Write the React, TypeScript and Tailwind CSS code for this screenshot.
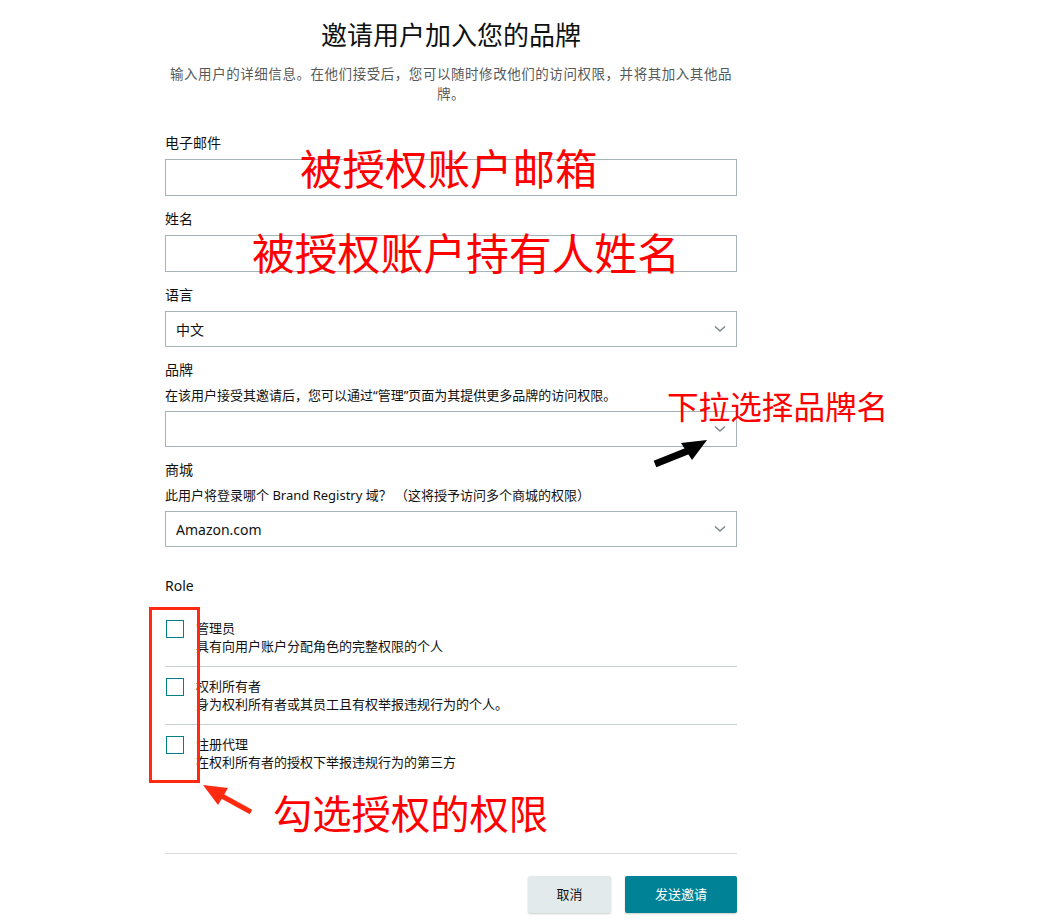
import React from 'react';

const font = { fontFamily: '"Noto Sans", "Noto Sans CJK SC", sans-serif' };

function Chevron() {
  return (
    <svg width="12" height="8" viewBox="0 0 12 8" className="absolute right-[10px] top-1/2 -translate-y-1/2">
      <path d="M1 1.5 L6 6 L11 1.5" fill="none" stroke="#7a8a8f" strokeWidth="1.5" />
    </svg>
  );
}

function Field({ label, help, children }: { label: string; help?: string; children: React.ReactNode }) {
  return (
    <div>
      <div className="text-[14px] leading-[20px] text-[#111]">{label}</div>
      {help && <div className="mt-[5px] text-[13px] leading-[20px] text-[#111]">{help}</div>}
      <div className="mt-[6px]">{children}</div>
    </div>
  );
}

function TextInput() {
  return <div className="h-[37px] w-full border border-[#a6b3b7] bg-white" />;
}

function Select({ value }: { value?: string }) {
  return (
    <div className="relative flex h-[36px] w-full items-center border border-[#a6b3b7] bg-white pl-[10px] text-[14px] text-[#111]">
      {value}
      <Chevron />
    </div>
  );
}

const roles = [
  { title: '管理员', desc: '具有向用户账户分配角色的完整权限的个人' },
  { title: '权利所有者', desc: '身为权利所有者或其员工且有权举报违规行为的个人。' },
  { title: '注册代理', desc: '在权利所有者的授权下举报违规行为的第三方' },
];

export default function App() {
  return (
    <div className="relative h-[922px] w-[1040px] overflow-hidden bg-white" style={font}>
      <div className="ml-[165px] w-[572px] pt-[18px]">
        <h1 className="text-center text-[26px] leading-[34px] text-[#0f1111]">邀请用户加入您的品牌</h1>
        <p className="mt-[12px] text-center text-[13.5px] leading-[20px] tracking-[0.55px] text-[#565959]">
          输入用户的详细信息。在他们接受后，您可以随时修改他们的访问权限，并将其加入其他品牌。
        </p>

        <div className="mt-[29px] flex flex-col gap-[13px]">
          <Field label="电子邮件">
            <TextInput />
          </Field>
          <Field label="姓名">
            <TextInput />
          </Field>
          <Field label="语言">
            <Select value="中文" />
          </Field>
          <Field label="品牌" help="在该用户接受其邀请后，您可以通过“管理”页面为其提供更多品牌的访问权限。">
            <Select />
          </Field>
          <Field label="商城" help="此用户将登录哪个 Brand Registry 域？ （这将授予访问多个商城的权限）">
            <Select value="Amazon.com" />
          </Field>
        </div>

        <div className="mt-[29px] text-[14px] leading-[20px] text-[#111]">Role</div>

        <div className="mt-[23px]">
          {roles.map((r, i) => (
            <div
              key={r.title}
              className={`flex gap-[12px] ${i < roles.length - 1 ? 'border-b border-[#c8d0d2] pb-[11px]' : ''} ${i > 0 ? 'pt-[10px]' : ''}`}
            >
              <div className="ml-[1px] mt-px h-[18px] w-[18px] shrink-0 border border-[#00808f] bg-white" />
              <div className="text-[13px] leading-[18px] text-[#111]">
                <div>{r.title}</div>
                <div>{r.desc}</div>
              </div>
            </div>
          ))}
        </div>

        <div className="mt-[82px] border-t border-[#dcdcdc]" />

        <div className="mt-[22px] flex justify-end gap-[14px]">
          <button className="h-[37px] w-[83px] rounded-[2px] bg-[#e3eaec] text-[13px] text-[#111] shadow-[0_1px_2px_rgba(0,0,0,0.2)]">
            取消
          </button>
          <button className="h-[37px] w-[112px] rounded-[2px] bg-[#008296] text-[13px] text-white shadow-[0_1px_2px_rgba(0,0,0,0.2)]">
            发送邀请
          </button>
        </div>
      </div>

      {/* annotations */}
      <div className="absolute left-[300px] top-[148px] text-[42.5px] leading-none text-[#ff0000]">被授权账户邮箱</div>
      <div className="absolute left-[252px] top-[233px] text-[42.8px] leading-none text-[#ff0000]">被授权账户持有人姓名</div>
      <div className="absolute left-[667px] top-[391px] text-[31.6px] leading-none text-[#ff0000]">下拉选择品牌名</div>
      <div className="absolute left-[273px] top-[795px] text-[39.3px] leading-none text-[#ff0000]">勾选授权的权限</div>

      <svg className="pointer-events-none absolute left-0 top-0" width="1040" height="922">
        <rect x="150.5" y="608.5" width="48" height="173" fill="none" stroke="#ff2a10" strokeWidth="3" />
        {/* red arrow */}
        <line x1="251" y1="812" x2="220" y2="795" stroke="#ff2a10" strokeWidth="5" />
        <polygon points="203,785 228,788 218,805" fill="#ff2a10" />
        {/* black arrow */}
        <line x1="655" y1="464" x2="690" y2="450" stroke="#000" strokeWidth="7" />
        <polygon points="707,440 681,443 692,460" fill="#000" />
      </svg>
    </div>
  );
}
